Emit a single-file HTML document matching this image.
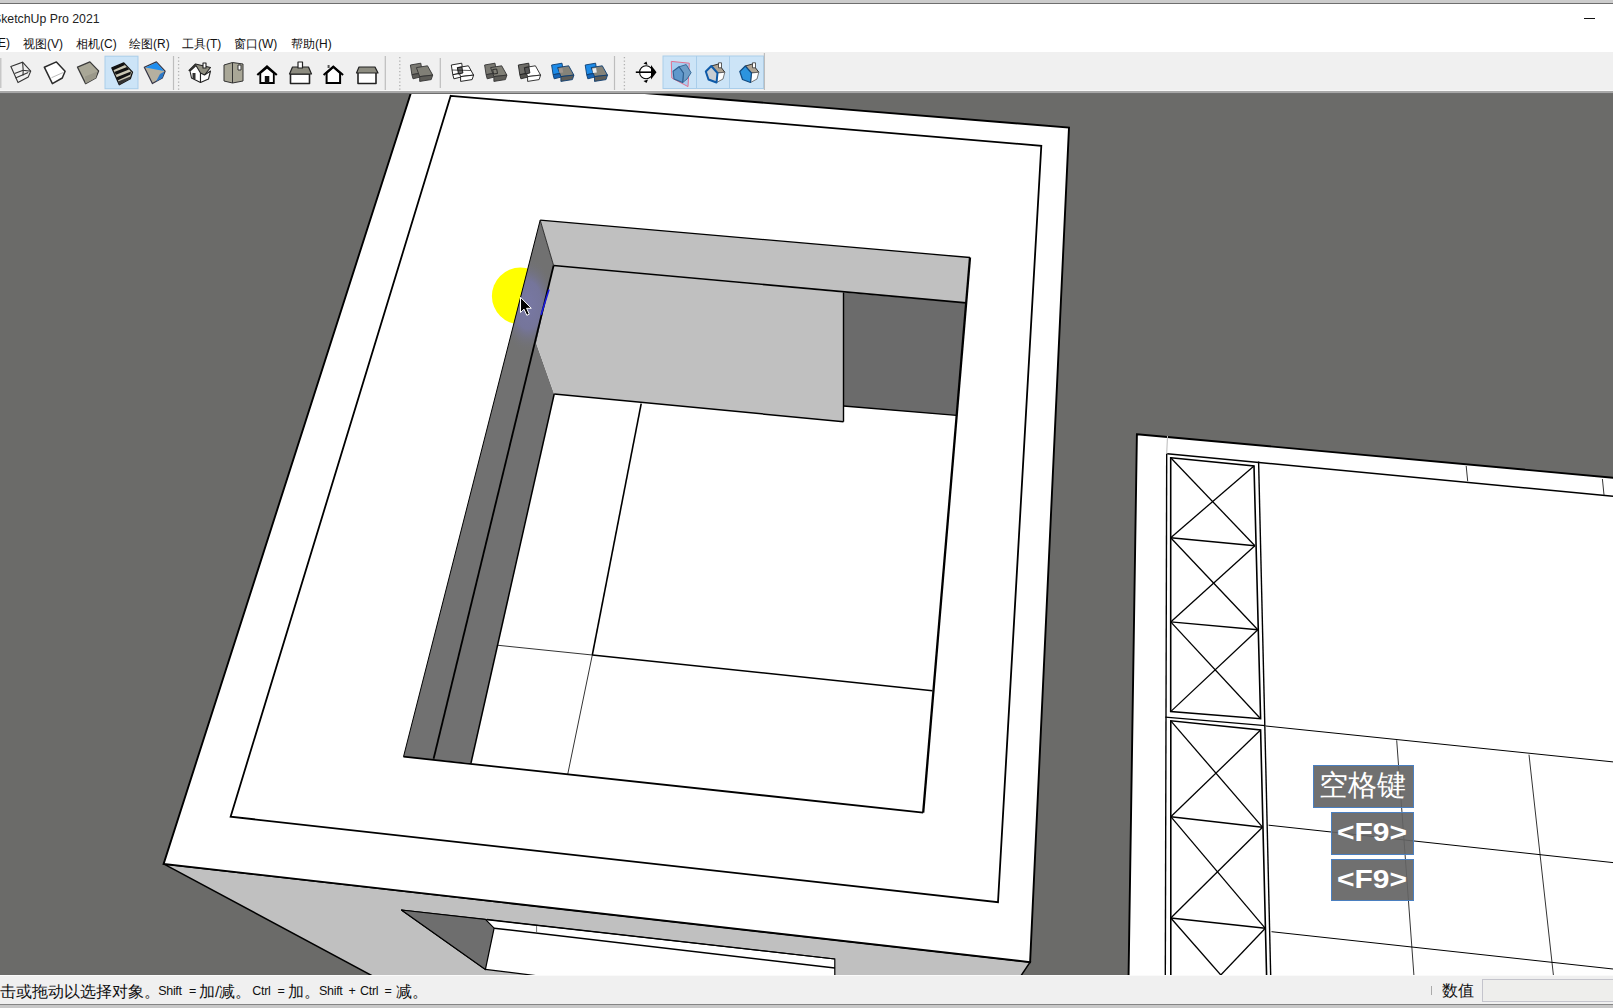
<!DOCTYPE html>
<html><head><meta charset="utf-8">
<style>
html,body{margin:0;padding:0;width:1613px;height:1008px;overflow:hidden;background:#fff;font-family:"Liberation Sans",sans-serif;}
#top{position:absolute;left:0;top:0;width:1613px;height:4px;background:linear-gradient(#cccccc 0 3px,#6e6e6e 3px 4px);}
#title{position:absolute;left:-7px;top:11.5px;font-size:12.3px;color:#222;white-space:nowrap;}
#menu{position:absolute;left:0;top:35.5px;font-size:12px;color:#111;white-space:nowrap;}
#menu span{position:absolute;top:0;}
#tb{position:absolute;left:0;top:52px;width:1613px;height:38px;background:#f0f0f0;}
#tbline{position:absolute;left:0;top:90px;width:1613px;height:3px;background:linear-gradient(#f8f8f8 0 1px,#a8a8a8 1px 3px);}
#status{position:absolute;left:0;top:975px;width:1613px;height:29px;background:linear-gradient(#fafafa 0 1px,#f0f0f0 1px);}
#sbot{position:absolute;left:0;top:1004px;width:1613px;height:4px;background:linear-gradient(#858585 0 1.5px,#c8c8c8 1.5px);}
#stext{position:absolute;left:0;top:976.5px;height:29px;width:1400px;color:#111;white-space:nowrap;}
#stext span{position:absolute;top:0;line-height:29px;}
#stext .cj{font-size:15.5px;}
#stext .la{font-size:12.5px;letter-spacing:-0.3px;}
svg{position:absolute;left:0;top:0;}
.key{position:absolute;background:rgba(100,100,100,0.92);border:1.5px solid #4a7fc0;box-sizing:content-box;}
.key .cn{position:absolute;left:5px;top:0px;font-family:"Liberation Serif",serif;font-size:29px;color:#fff;white-space:nowrap;line-height:38px;}
.key .f9{position:absolute;left:5px;top:-1px;font-family:"Liberation Sans",sans-serif;font-weight:bold;font-size:25px;color:#fff;white-space:nowrap;line-height:41px;transform:scaleX(1.2);transform-origin:0 50%;}
</style></head><body>
<div id="top"></div>
<div id="title">SketchUp Pro 2021</div>
<div id="menu">
<span style="left:-6px">(E)</span>
<span style="left:23px">视图(V)</span>
<span style="left:76px">相机(C)</span>
<span style="left:129px">绘图(R)</span>
<span style="left:182px">工具(T)</span>
<span style="left:234px">窗口(W)</span>
<span style="left:291px">帮助(H)</span>
</div>
<div style="position:absolute;left:1584px;top:18px;width:10.5px;height:1px;background:#111"></div>
<div id="tb"></div>
<div id="tbline"></div>
<svg width="1613" height="93" viewBox="0 0 1613 93" style="position:absolute;left:0;top:0">
<!-- highlights -->
<rect x="105" y="56.2" width="33" height="32.5" fill="#cce4f7" stroke="#a9cdea" stroke-width="1"/>
<rect x="663" y="56" width="100.5" height="32.5" fill="#cce4f7" stroke="#a9cdea" stroke-width="1"/>
<line x1="696.5" y1="56" x2="696.5" y2="88.5" stroke="#a9cdea" stroke-width="1"/>
<line x1="729.5" y1="56" x2="729.5" y2="88.5" stroke="#a9cdea" stroke-width="1"/>
<!-- separators -->
<g stroke="#bdbdbd" stroke-width="1.2">
<line x1="0.8" y1="58" x2="0.8" y2="88"/>
<line x1="173.5" y1="56" x2="173.5" y2="90"/>
<line x1="385.3" y1="56" x2="385.3" y2="90"/>
<line x1="440.3" y1="58" x2="440.3" y2="88"/>
<line x1="614.5" y1="56" x2="614.5" y2="90"/>
<line x1="764.4" y1="53" x2="764.4" y2="90"/>
</g>
<g stroke="#b0b0b0" stroke-width="1.3" stroke-dasharray="1.2 2.3">
<line x1="178.6" y1="57" x2="178.6" y2="90"/>
<line x1="399.8" y1="57" x2="399.8" y2="90"/>
<line x1="624.4" y1="57" x2="624.4" y2="90"/>
</g>
<!-- cube icons -->
<g transform="translate(10,61)" fill="none" stroke="#333" stroke-width="1.1">
<polygon points="0.9,5.6 12.6,1.2 20.7,10.2 18.2,16.1 8,21.4"/>
<polyline points="12.6,1.2 13.2,9.3 20.7,10.2"/>
<polyline points="4.6,12.4 13.2,9.3"/>
<polyline points="5.5,17 18.2,11.5"/>
<polyline points="13.2,9.3 13,14.5"/>
</g>
<g transform="translate(44,61)" stroke="#2b2b2b" stroke-width="1.5" stroke-linejoin="round">
<polygon points="0.3,6.2 12.4,0.9 21.1,10.2 18.3,17 8.4,22.6" fill="#fff"/>
<line x1="7.5" y1="16.7" x2="19.2" y2="11.5" stroke="#aaa" stroke-width="0.8"/>
</g>
<g transform="translate(77,61)" stroke="#3a3a3a" stroke-width="1.3" stroke-linejoin="round">
<polygon points="0.5,6.2 12.9,0.9 21.6,9.9 18.8,17 8.6,22.6" fill="#a9a797"/>
<polygon points="8,15.5 20.5,10.5 18.8,17 8.6,22.6" fill="#9a988a" stroke="none"/>
</g>
<g transform="translate(111.5,62)" stroke-linejoin="round">
<polygon points="0.4,5.9 12.3,0.9 21,10.1 18.8,16.8 7.8,22.7" fill="#c9c6b2" stroke="#111" stroke-width="1.3"/>
<polygon points="0.4,5.9 12.3,0.9 13.5,3 1.8,8.2" fill="#111"/>
<polygon points="2.8,10 15.5,5 17.5,7.5 4.5,12.8" fill="#111"/>
<polygon points="5,15.2 19.5,9.5 19,12.5 6,18.5" fill="#111"/>
<polygon points="6.5,19.5 18.8,14.5 18.8,16.8 7.8,22.7" fill="#333"/>
</g>
<g transform="translate(144,61)" stroke-linejoin="round">
<polygon points="0.3,6.2 12.4,0.9 21.1,10.2 18.3,17 8.4,22.6" fill="#b5b0a0" stroke="#334" stroke-width="1.2"/>
<polygon points="1.5,6.5 12.4,1.5 20,10 " fill="#1e8ef0"/>
<polygon points="20.5,10.5 18.3,17 12,20.5 16,13" fill="#2a78c8"/>
</g>
<!-- house icons -->
<g transform="translate(188.5,62)" stroke="#222" stroke-width="1.1" stroke-linejoin="round">
<polygon points="0.5,8.5 7,2 22,5.5 16,13" fill="#8f8e80"/>
<polygon points="1.5,9 7.5,3.5 12,11 12,20.5 3,16" fill="#fff"/>
<polygon points="12,11 16,13 22,9 20,17 12,20.5" fill="#fff"/>
<rect x="4" y="11" width="3" height="6" fill="#333" stroke="none"/>
<rect x="14.5" y="1" width="3" height="5" fill="#fff"/>
</g>
<g transform="translate(223.5,62)" stroke="#333" stroke-width="1" stroke-linejoin="round">
<polygon points="0.5,3 9,0.5 19.5,2 19.5,19 9,21 0.5,19" fill="#a9a797"/>
<line x1="9" y1="0.5" x2="9" y2="21"/>
<rect x="14.5" y="3" width="3" height="5" fill="#fff"/>
</g>
<g transform="translate(256.3,65)" stroke="#000" stroke-width="2.2" stroke-linejoin="miter">
<polyline points="1,10 10.7,1.5 20.5,10" fill="none"/>
<polygon points="4,8 4,18 17.5,18 17.5,8 10.7,2.5" fill="#fff" stroke-width="1.8"/>
<rect x="8.5" y="11" width="4.5" height="7" fill="#111" stroke="none"/>
</g>
<g transform="translate(289,61)" stroke="#222" stroke-width="1.2" stroke-linejoin="round">
<rect x="1.5" y="13" width="19" height="9.5" fill="#fff" stroke-width="1.6"/>
<polygon points="0.5,13 3.5,6 19.5,6 22.5,13" fill="#8d8c80"/>
<rect x="9" y="1" width="4.5" height="6" fill="#fff"/>
</g>
<g transform="translate(322.6,65)" stroke="#000" stroke-width="2" stroke-linejoin="miter">
<polygon points="4,8 4,18 17.5,18 17.5,8 10.7,2" fill="#fff"/>
<polyline points="1,10 10.7,1.5 20.5,10" fill="none"/>
<rect x="5" y="0" width="2" height="3" fill="#555" stroke="none"/>
</g>
<g transform="translate(356,64)" stroke="#222" stroke-width="1.2" stroke-linejoin="round">
<rect x="2" y="8" width="18" height="11.5" fill="#fff" stroke-width="1.6"/>
<polygon points="0.5,9 3,3 19,3 22,9" fill="#8d8c80"/>
</g>
<!-- group 3 -->
<g transform="translate(0,0)" stroke="#333" stroke-width="0.9" stroke-linejoin="round">
<polygon points="410.4,65 420.8,63.2 422.3,72.9 411.9,74.7" fill="#7a7972"/>
<polygon points="411.9,74.7 422.3,72.9 421.9,76.6 413,78.8" fill="#5c5b57"/>
<polygon points="416.4,67.6 427.5,65.8 432.7,75.1 419.7,76.6" fill="#807f76"/>
<polygon points="419.7,76.6 432.7,75.1 431.2,79.6 419.7,81.4" fill="#5e5d58"/>
</g>
<g transform="translate(40.9,0)" stroke="#111" stroke-width="0.9" stroke-linejoin="round">
<polygon points="410.4,65 420.8,63.2 422.3,72.9 411.9,74.7" fill="#fff"/>
<polygon points="411.9,74.7 422.3,72.9 421.9,76.6 413,78.8" fill="#fff"/>
<polygon points="416.4,67.6 427.5,65.8 432.7,75.1 419.7,76.6" fill="#fff"/>
<polygon points="419.7,76.6 432.7,75.1 431.2,79.6 419.7,81.4" fill="#fff"/>
<polygon points="416.6,67.8 421,67 422,73 417.5,74" fill="#666"/><line x1="411" y1="70" x2="430" y2="70.5" stroke-width="0.7"/></g>
<g transform="translate(74.2,0)" stroke="#333" stroke-width="0.9" stroke-linejoin="round">
<polygon points="410.4,65 420.8,63.2 422.3,72.9 411.9,74.7" fill="#7a7972"/>
<polygon points="411.9,74.7 422.3,72.9 421.9,76.6 413,78.8" fill="#5c5b57"/>
<polygon points="416.4,67.6 427.5,65.8 432.7,75.1 419.7,76.6" fill="#807f76"/>
<polygon points="419.7,76.6 432.7,75.1 431.2,79.6 419.7,81.4" fill="#5e5d58"/>
<polygon points="418.5,69.5 422.5,69 423.3,73.5 419.3,74" fill="none" stroke="#222"/></g>
<g transform="translate(107.9,0)" stroke="#222" stroke-width="0.9" stroke-linejoin="round">
<polygon points="410.4,65 420.8,63.2 422.3,72.9 411.9,74.7" fill="#6e6d68"/>
<polygon points="411.9,74.7 422.3,72.9 421.9,76.6 413,78.8" fill="#555450"/>
<polygon points="416.4,67.6 427.5,65.8 432.7,75.1 419.7,76.6" fill="#fff"/>
<polygon points="419.7,76.6 432.7,75.1 431.2,79.6 419.7,81.4" fill="#fff"/>
<polygon points="416.6,67.8 421,67 422,73 417.5,74" fill="#555"/></g>
<g transform="translate(141.2,0)" stroke="#0d3d70" stroke-width="0.9" stroke-linejoin="round">
<polygon points="410.4,65 420.8,63.2 422.3,72.9 411.9,74.7" fill="#1d8be8"/>
<polygon points="411.9,74.7 422.3,72.9 421.9,76.6 413,78.8" fill="#1565b8"/>
<polygon points="416.4,67.6 427.5,65.8 432.7,75.1 419.7,76.6" fill="#858379"/>
<polygon points="419.7,76.6 432.7,75.1 431.2,79.6 419.7,81.4" fill="#5e5d58"/>
<polygon points="417.5,68.5 421.3,68 422,72.5 418.2,73" fill="#a0968e" stroke="none"/></g>
<g transform="translate(174.8,0)" stroke="#0d3d70" stroke-width="0.9" stroke-linejoin="round">
<polygon points="410.4,65 420.8,63.2 422.3,72.9 411.9,74.7" fill="#1d8be8"/>
<polygon points="411.9,74.7 422.3,72.9 421.9,76.6 413,78.8" fill="#1565b8"/>
<polygon points="416.4,67.6 427.5,65.8 432.7,75.1 419.7,76.6" fill="#858379"/>
<polygon points="419.7,76.6 432.7,75.1 431.2,79.6 419.7,81.4" fill="#5e5d58"/>
<polygon points="417.5,68.5 421.3,68 422,72.5 418.2,73" fill="#ececec" stroke="none"/></g>
<!-- axes icon -->
<g stroke="#000" fill="none">
<circle cx="646.1" cy="72.2" r="6.5" fill="#fff" stroke-width="1.1"/>
<line x1="635.8" y1="72.2" x2="655" y2="72.2" stroke-width="1.6"/>
<polygon points="651,65 656.5,72.2 651,79.5" fill="#000" stroke="none"/>
<polygon points="643.5,63.5 646.5,61.5 647.5,65" fill="#000" stroke="none"/>
<polygon points="643.5,81 646.5,83 648,79.5" fill="#000" stroke="none"/>
</g>
<!-- blue house icons -->
<g transform="translate(669,61)" stroke-linejoin="round">
<polygon points="2.3,0.4 20.3,2.2 19,25.6 2.8,17" fill="#a8cdf0" stroke="#e2708f" stroke-width="1"/>
<polygon points="10,5.8 17.2,3.6 22.1,11.7 18,18 13.6,21.6 14.5,12.1" fill="#6f9ec8" stroke="#3a6a98" stroke-width="1"/>
<polygon points="10,5.8 4.1,10.3 5,18 13.6,21.6 14.5,12.1" fill="#5f98cc" stroke="#2d5f90" stroke-width="1.1"/>
</g>
<g transform="translate(705,62)" stroke-linejoin="round">
<polygon points="6.3,4 13.5,2 19.8,10.2 12.5,11" fill="#b0a594" stroke="#333" stroke-width="1"/>
<polygon points="12.5,11 19.8,10.2 18,17 11.5,20.5" fill="#fff" stroke="#555" stroke-width="0.8"/>
<rect x="13.5" y="0.8" width="3" height="5" fill="#fff" stroke="#333" stroke-width="0.8"/>
<polygon points="6.3,4 0.8,9.5 3.5,17.5 11.5,20.5 12.5,11" fill="#c9ced3" stroke="#0e5aa8" stroke-width="2"/>
</g>
<g transform="translate(739,62)" stroke-linejoin="round">
<polygon points="6.3,4 13.5,2 19.8,10.2 12.5,11" fill="#b0a594" stroke="#333" stroke-width="1"/>
<polygon points="12.5,11 19.8,10.2 18,17 11.5,20.5" fill="#fff" stroke="#555" stroke-width="0.8"/>
<rect x="13.5" y="0.8" width="3" height="5" fill="#fff" stroke="#333" stroke-width="0.8"/>
<polygon points="6.3,4 0.8,9.5 3.5,17.5 11.5,20.5 12.5,11" fill="#2c94de" stroke="#124a80" stroke-width="1.2"/>
</g>
</svg>


<svg width="1613" height="1008" viewBox="0 0 1613 1008">
<defs><clipPath id="vp"><rect x="0" y="93" width="1613" height="882"/></clipPath></defs>
<g clip-path="url(#vp)">
<rect x="0" y="93" width="1613" height="882" fill="#6b6b69"/>
<!-- big building side face -->
<polygon points="163.6,863.9 1030.1,962.1 1014.8,985 389.4,985" fill="#c0c0c0" stroke="#000" stroke-width="1.5"/>
<!-- opening -->
<polygon points="401.4,910 834.8,959 834.8,990 571.2,980 485.4,969.4" fill="#fff" stroke="#000" stroke-width="1.2"/>
<polygon points="401.4,910 485.4,919.4 494.1,928.2 485.4,969.4" fill="#6e6e6e" stroke="#000" stroke-width="1.2"/>
<line x1="494.1" y1="928.2" x2="834.8" y2="968" stroke="#000" stroke-width="1.4"/>
<line x1="536.6" y1="926" x2="536.6" y2="932" stroke="#555" stroke-width="0.8"/>
<line x1="487" y1="919.4" x2="834.8" y2="959" stroke="#000" stroke-width="1.2"/>
<!-- top face -->
<polygon points="416.8,74.5 1069,127.6 1030.1,962.1 163.6,863.9" fill="#fff" stroke="#000" stroke-width="1.9"/>
<polygon points="450.7,95.8 1041.3,145.8 998,902.2 230.6,816.7" fill="none" stroke="#000" stroke-width="1.8"/>
<!-- yellow -->
<circle cx="520.3" cy="296" r="28.4" fill="#ffff00"/>
<!-- hole walls -->
<polygon points="540.2,220.1 553.6,265.5 536.3,343.6 554.2,394 471,763 403.5,756.7" fill="#717171"/>
<clipPath id="wallclip"><polygon points="540.2,220.1 553.6,265.5 536.3,343.6 554.2,394 471,763 403.5,756.7"/></clipPath>
<radialGradient id="glow" cx="0.5" cy="0.5" r="0.5"><stop offset="0" stop-color="#7878a4"/><stop offset="0.5" stop-color="#75759a"/><stop offset="1" stop-color="#717171" stop-opacity="0"/></radialGradient>
<ellipse cx="528" cy="305" rx="28" ry="48" fill="url(#glow)" clip-path="url(#wallclip)"/>
<polygon points="540.2,220.1 970,257.5 966.2,302.9 553.6,265.5" fill="#c0c0c0"/>
<polygon points="553.6,265.5 843.5,292.5 843.5,421.7 554.2,394 536.3,343.6" fill="#c0c0c0"/>
<polygon points="843.5,292.5 966.2,302.9 956.7,415.4 843.5,406" fill="#6b6b6b"/>
<g stroke="#000" fill="none">
<polyline points="540.2,220.1 970,257.5" stroke-width="1.3"/>
<line x1="540.2" y1="220.1" x2="553.6" y2="265.5" stroke-width="0.9" stroke="#222"/>
<polyline points="923.2,812.6 403.5,756.7" stroke-width="1.8"/>
<polyline points="403.5,756.7 540.2,220.1" stroke-width="1"/>
<line x1="553.6" y1="265.5" x2="966.2" y2="302.9" stroke-width="1.6"/>
<line x1="553.6" y1="265.5" x2="433.6" y2="758.7" stroke-width="1.8"/>
<line x1="554.2" y1="394" x2="471" y2="763" stroke-width="1.5"/>
<line x1="554.2" y1="394" x2="843.5" y2="421.7" stroke-width="1.5"/>
<line x1="843.5" y1="292.5" x2="843.5" y2="421.7" stroke-width="1.4"/>
<line x1="843.5" y1="406" x2="956.7" y2="415.4" stroke-width="1.4"/>
<line x1="970" y1="257.5" x2="923.2" y2="812.6" stroke-width="2.3"/>
<line x1="641.2" y1="403.6" x2="592.3" y2="655" stroke-width="1.6"/>
<line x1="592.3" y1="655" x2="567.6" y2="774.8" stroke-width="0.8"/>
<line x1="592.3" y1="655" x2="932.5" y2="690.7" stroke-width="1.6"/>
<line x1="497.1" y1="645.2" x2="592.3" y2="655" stroke-width="0.8"/>
</g>
<line x1="549" y1="289.4" x2="541.1" y2="314.8" stroke="#1a1ae0" stroke-width="1.6"/>
<path d="M520.5,297.3 L520.5,312.5 L524,309.2 L526.8,315.3 L529.3,314.2 L526.6,308.3 L531.3,308.3 Z" fill="#000" stroke="#fff" stroke-width="1"/>
<!-- right building -->
<polygon points="1136.9,434.2 1623,478.7 1623,980 1128.5,980" fill="#fff" stroke="#000" stroke-width="1.9"/>
<g stroke="#000" fill="none">
<line x1="1167.2" y1="453.7" x2="1613" y2="496.3" stroke-width="1.5"/>
<line x1="1167.5" y1="436" x2="1166.7" y2="453.8" stroke="#bbb" stroke-width="1"/>
<line x1="1466.2" y1="466" x2="1467.7" y2="481.2" stroke-width="0.8"/>
<line x1="1602.4" y1="479" x2="1604" y2="494.9" stroke-width="0.8"/>
<!-- frame outer -->
<line x1="1166.7" y1="453.8" x2="1165.3" y2="980" stroke-width="1.4"/>
<line x1="1258.6" y1="461.6" x2="1270.8" y2="980" stroke-width="1.4"/>
<!-- cabinet 1 -->
<polygon points="1170.7,457.8 1254,465.9 1260.6,718.7 1170.7,711.6" stroke-width="1.6"/>
<line x1="1170.7" y1="537.7" x2="1254.9" y2="545.7" stroke-width="1.4"/>
<line x1="1170.7" y1="621.9" x2="1257.8" y2="629.7" stroke-width="1.4"/>
<line x1="1170.7" y1="457.8" x2="1254.9" y2="545.7" stroke-width="1.3"/>
<line x1="1254" y1="465.9" x2="1170.7" y2="537.7" stroke-width="1.3"/>
<line x1="1170.7" y1="537.7" x2="1257.8" y2="629.7" stroke-width="1.3"/>
<line x1="1254.9" y1="545.7" x2="1170.7" y2="621.9" stroke-width="1.3"/>
<line x1="1170.7" y1="621.9" x2="1260.6" y2="718.7" stroke-width="1.3"/>
<line x1="1257.8" y1="629.7" x2="1170.7" y2="711.6" stroke-width="1.3"/>
<line x1="1165.3" y1="717.2" x2="1265.3" y2="725.6" stroke-width="1.3"/>
<!-- cabinet 2 -->
<polyline points="1170.8,980 1170.8,720.8 1260.6,730 1266.7,980" stroke-width="1.6"/>
<line x1="1170.8" y1="816.7" x2="1262.5" y2="827.2" stroke-width="1.4"/>
<line x1="1170.8" y1="918" x2="1265.3" y2="928.3" stroke-width="1.4"/>
<line x1="1170.8" y1="720.8" x2="1262.5" y2="827.2" stroke-width="1.3"/>
<line x1="1260.6" y1="730" x2="1170.8" y2="816.7" stroke-width="1.3"/>
<line x1="1170.8" y1="816.7" x2="1265.3" y2="928.3" stroke-width="1.3"/>
<line x1="1262.5" y1="827.2" x2="1170.8" y2="918" stroke-width="1.3"/>
<line x1="1170.8" y1="918" x2="1220.8" y2="975" stroke-width="1.3"/>
<line x1="1265.3" y1="928.3" x2="1220.8" y2="975" stroke-width="1.3"/>
<!-- floor lines -->
<line x1="1265.8" y1="726" x2="1613" y2="761.9" stroke-width="1"/>
<line x1="1268.6" y1="825.2" x2="1613" y2="862.6" stroke-width="1"/>
<line x1="1271.5" y1="931.7" x2="1613" y2="969" stroke-width="1"/>
<line x1="1396.7" y1="740.3" x2="1413.9" y2="975" stroke-width="0.8"/>
<line x1="1529" y1="754.7" x2="1553.4" y2="975" stroke-width="0.8"/>
</g>
<rect x="0" y="93" width="1613" height="1" fill="#6e6e6e"/>
</g>
</svg>


<div class="key" style="left:1313px;top:765px;width:99px;height:41px;"><span class="cn">空格键</span></div>
<div class="key" style="left:1331px;top:812px;width:81px;height:41px;"><span class="f9">&lt;F9&gt;</span></div>
<div class="key" style="left:1331px;top:859px;width:81px;height:40px;"><span class="f9">&lt;F9&gt;</span></div>
<div id="status"></div>
<div id="sbot"></div>
<div style="position:absolute;left:1431px;top:986px;width:1px;height:9px;background:#aaa"></div>
<div style="position:absolute;left:1441.5px;top:980.5px;font-size:16px;color:#111;white-space:nowrap;">数值</div>
<div style="position:absolute;left:1482px;top:979px;width:140px;height:23px;background:#eeeeec;border:1px solid #c4c4cc;box-sizing:border-box;"></div>

<div id="stext"><span class="cj" style="left:-16px">点击或拖动以选择对象。</span><span class="la" style="left:158.2px">Shift</span><span class="la" style="left:189px">=</span><span class="cj" style="left:199px">加/减。</span><span class="la" style="left:252.3px">Ctrl</span><span class="la" style="left:277.5px">=</span><span class="cj" style="left:287.8px">加。</span><span class="la" style="left:319px">Shift</span><span class="la" style="left:348.5px">+</span><span class="la" style="left:360px">Ctrl</span><span class="la" style="left:384.5px">=</span><span class="cj" style="left:395.5px">减。</span></div>
</body></html>
